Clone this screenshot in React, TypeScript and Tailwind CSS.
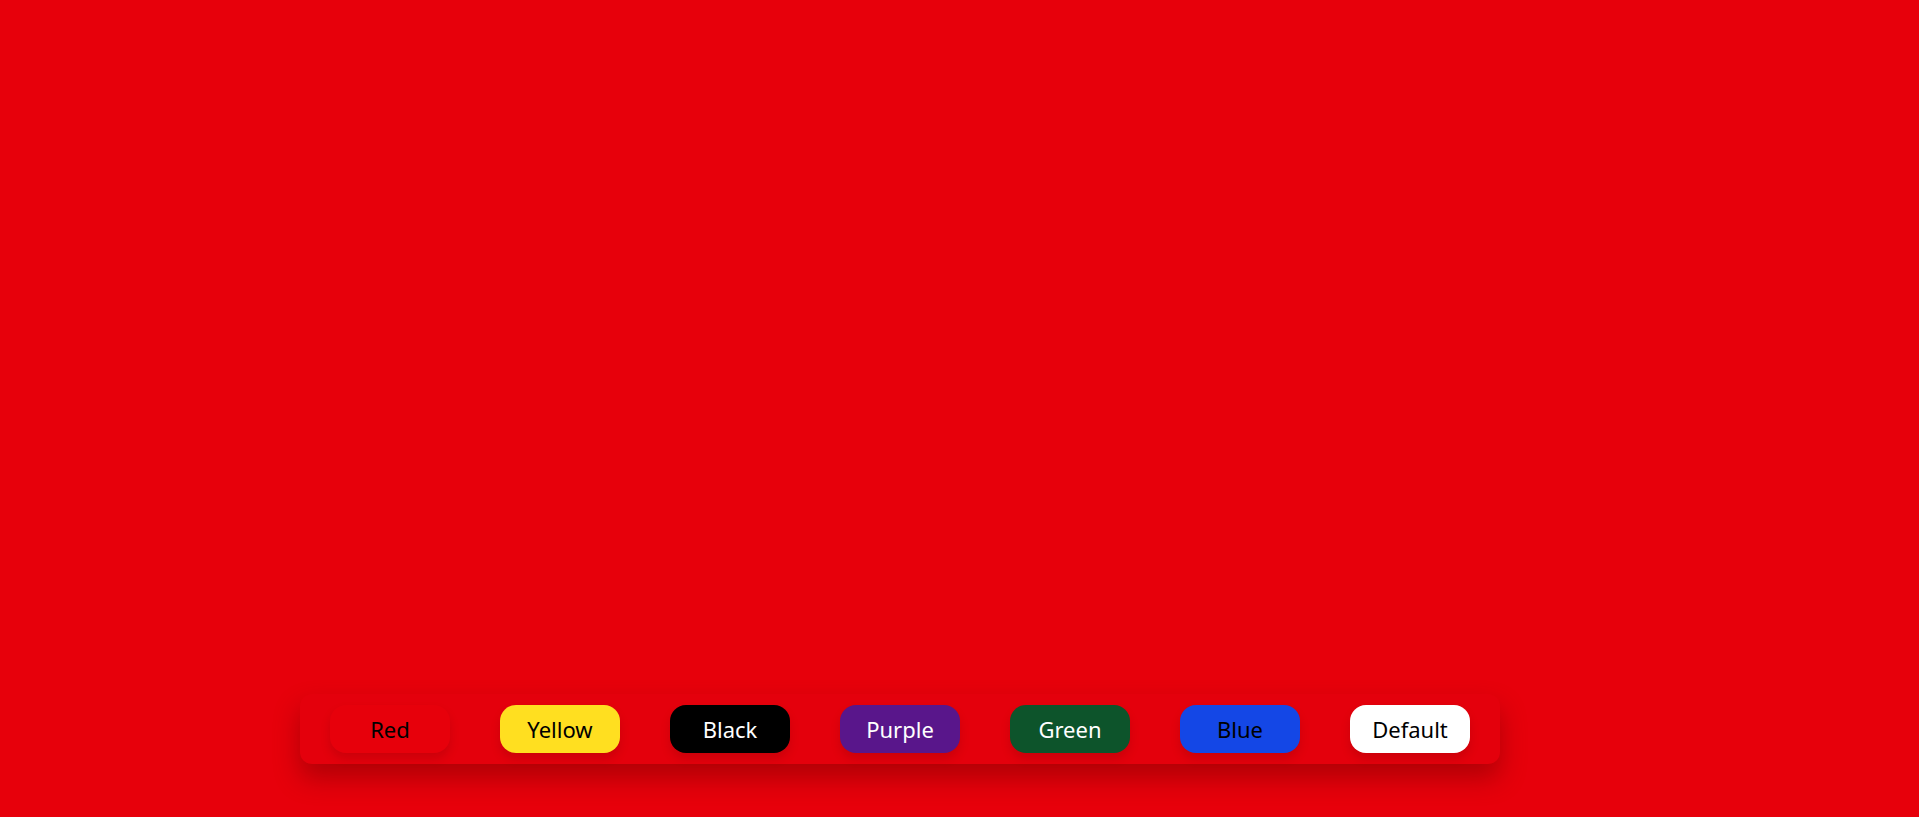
const swatches = [
  { name: "Red", className: "bg-red-600 text-black" },
  { name: "Yellow", className: "bg-yellow-300 text-black" },
  { name: "Black", className: "bg-black text-white" },
  { name: "Purple", className: "bg-purple-900 text-white" },
  { name: "Green", className: "bg-green-900 text-white" },
  { name: "Blue", className: "bg-blue-700 text-black" },
  { name: "Default", className: "bg-white text-black" },
];

export default function App() {
  return (
    <div className="flex min-h-screen flex-col items-start justify-end bg-red-600 pb-[53px] pl-[300px] font-['Noto_Sans',sans-serif]">
      <div className="flex w-[1200px] items-center gap-[50px] rounded-xl bg-[#e4000c] px-[30px] py-[11px] shadow-[0_14px_26px_rgba(110,0,0,0.45)]">
        {swatches.map((s) => (
          <button
            key={s.name}
            className={`flex h-12 w-[120px] items-center justify-center rounded-2xl text-[22px] shadow-[0_6px_10px_rgba(110,0,0,0.2)] ${s.className}`}
          >
            {s.name}
          </button>
        ))}
      </div>
    </div>
  );
}
